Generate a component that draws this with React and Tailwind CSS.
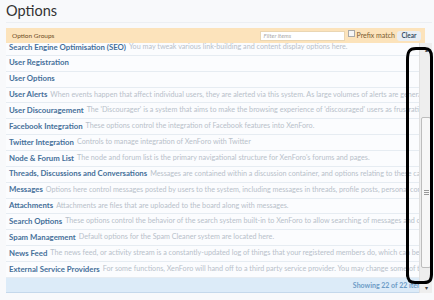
import React from 'react';

const groups = [
  ['Search Engine Optimisation (SEO)', 'You may tweak various link-building and content display options here.'],
  ['User Registration', ''],
  ['User Options', ''],
  ['User Alerts', 'When events happen that affect individual users, they are alerted via this system. As large volumes of alerts are generated, they can be pruned here.'],
  ['User Discouragement', "The 'Discourager' is a system that aims to make the browsing experience of 'discouraged' users as frustrating as possible."],
  ['Facebook Integration', 'These options control the integration of Facebook features into XenForo.'],
  ['Twitter Integration', 'Controls to manage integration of XenForo with Twitter'],
  ['Node & Forum List', "The node and forum list is the primary navigational structure for XenForo's forums and pages."],
  ['Threads, Discussions and Conversations', 'Messages are contained within a discussion container, and options relating to these can be set here.'],
  ['Messages', 'Options here control messages posted by users to the system, including messages in threads, profile posts, personal conversations and more.'],
  ['Attachments', 'Attachments are files that are uploaded to the board along with messages.'],
  ['Search Options', 'These options control the behavior of the search system built-in to XenForo to allow searching of messages and other content.'],
  ['Spam Management', 'Default options for the Spam Cleaner system are located here.'],
  ['News Feed', 'The news feed, or activity stream is a constantly-updated log of things that your registered members do, which can be viewed by others.'],
  ['External Service Providers', 'For some functions, XenForo will hand off to a third party service provider. You may change some of these here.'],
];

const GroupRow = ({ title, description }) => (
  <div className="flex h-[15.86px] items-center gap-[3px] whitespace-nowrap border-b border-[#e6ecf2] bg-[#fbfcfe] pl-[3px]">
    <span className="text-[7.8px] font-bold text-[#46709a]">{title}</span>
    {description && <span className="text-[7.2px] text-[#b8c1ca]">{description}</span>}
  </div>
);

const Scrollbar = () => (
  <div className="flex w-[13px] flex-col border-l border-[#e0e0e0] bg-[#eeeeee]">
    <div className="flex h-[13px] items-center justify-center text-[6px] text-[#555]">▴</div>
    <div className="mx-[1px] mt-[61px] flex h-[151px] items-center justify-center rounded-[2px] border border-[#bdbdbd] bg-[#f7f7f7]">
      <div className="flex flex-col gap-[1px]">
        <div className="h-px w-[5px] bg-[#999]" />
        <div className="h-px w-[5px] bg-[#999]" />
        <div className="h-px w-[5px] bg-[#999]" />
      </div>
    </div>
    <div className="mt-auto flex h-[12px] items-center justify-center text-[6px] text-[#444]">▾</div>
  </div>
);

export default function App() {
  return (
    <div className="relative h-[300px] w-[434px] overflow-hidden bg-[#f8f9fb] font-['Lato','Liberation_Sans',sans-serif]">
      <div className="pl-[6px] pr-[2px]">
        <h1 className="h-[23px] border-b border-[#eceff3] text-[14.5px] leading-[22px] text-[#333]">Options</h1>

        <div className="mr-[7px] mt-[5px] flex h-[15px] items-center bg-[#fce3bb] pl-[6px] pr-[4px]">
          <span className="text-[6.5px] text-[#6f4d25]">Option Groups</span>
          <div className="ml-auto flex h-[10px] w-[85px] items-center border border-[#ead6b3] bg-white pl-[3px] text-[6px] italic text-[#aaa]">
            Filter items
          </div>
          <div className="ml-[3px] mt-[2px] h-[7px] w-[7px] self-start border border-[#a9a9a9] bg-[#f6f6f6]" />
          <span className="ml-[2px] text-[7px] text-[#7a5a30]">Prefix match</span>
          <div className="ml-[2px] flex h-[10px] w-[24px] items-center justify-center rounded-[3px] bg-[#e9eef4] text-[6.5px] font-bold text-[#394e64]">
            Clear
          </div>
        </div>

        <div className="flex h-[250px]">
          <div className="min-w-0 flex-1 overflow-hidden">
            <div className="-mt-[3px] w-[422px]">
              {groups.map(([title, description]) => (
                <GroupRow key={title} title={title} description={description} />
              ))}
              <div className="flex h-[15px] items-center justify-end border-b border-[#c4d8eb] bg-[#dcebf8] pr-[2px]">
                <span className="text-[7px] font-bold text-[#6d9bc6]">Showing 22 of 22 items</span>
              </div>
            </div>
          </div>
          <Scrollbar />
        </div>
      </div>

      {/* hand-drawn highlight around the scrollbar */}
      <svg className="pointer-events-none absolute inset-0" width="434" height="300" viewBox="0 0 434 300">
        <path
          d="M407.5,276 L407.5,60 C407.5,52 409,48.5 416,48.5 L425,48.5 C429.5,48.5 431.5,51 431.5,57 L431.5,274 C431.5,280 430,282.5 424,282.5 L415,282.5 C409.5,282.5 407.5,280 407.5,274"
          fill="none"
          stroke="#000"
          strokeWidth="3"
          strokeLinecap="round"
        />
      </svg>
    </div>
  );
}
